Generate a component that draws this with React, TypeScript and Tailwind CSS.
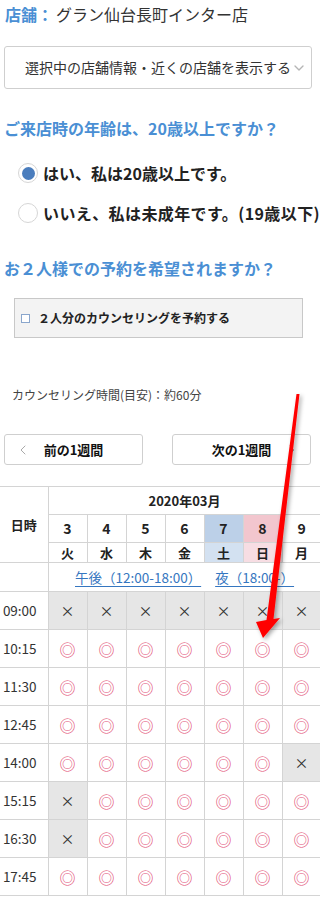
import React from 'react';
import { ChevronDown, ChevronLeft, ChevronRight } from 'lucide-react';

const days = [
    { d: "3", w: "火" },
    { d: "4", w: "水" },
    { d: "5", w: "木" },
    { d: "6", w: "金" },
    { d: "7", w: "土" },
    { d: "8", w: "日" },
    { d: "9", w: "月" },
];

// o = available, x = full
const slots: { time: string; marks: string }[] = [
    { time: "09:00", marks: "xxxxxxx" },
    { time: "10:15", marks: "ooooooo" },
    { time: "11:30", marks: "ooooooo" },
    { time: "12:45", marks: "ooooooo" },
    { time: "14:00", marks: "oooooox" },
    { time: "15:15", marks: "xoooooo" },
    { time: "16:30", marks: "xoooooo" },
    { time: "17:45", marks: "ooooooo" },
];

const Radio = ({ checked, label, wide }: { checked: boolean; label: string; wide?: boolean }) => (
    <div className="flex h-6 items-center whitespace-nowrap pl-[18px]">
        <span className="flex h-[20px] w-[20px] shrink-0 items-center justify-center rounded-full border border-[#d6d6d6] bg-white">
            {checked && <span className="h-[13px] w-[13px] rounded-full bg-[#4a7dbd]" />}
        </span>
        <span className={`ml-[5px] text-[16px] font-bold text-[#222] ${wide ? "tracking-[0.4px]" : ""}`}>{label}</span>
    </div>
);

const App = () => {
    return (
        <div className="relative min-h-[898px] w-[320px] overflow-hidden bg-white font-[Noto_Sans_CJK_JP,sans-serif] text-[#333]">
            <p className="whitespace-nowrap px-[5px] pt-[2px] text-[16px] leading-6">
                <span className="mr-[3px] font-bold text-[#4a8fd4]">店舗：</span>グラン仙台長町インター店
            </p>

            <div className="mx-[4px] mt-5 flex h-[43px] w-[308px] items-center rounded-[3px] border border-[#cfcfcf] pl-[20px] text-[14px] text-[#333] whitespace-nowrap">
                選択中の店舗情報・近くの店舗を表示する
                <ChevronDown size={16} strokeWidth={2} className="text-[#b5b5b5]" />
            </div>

            <h2 className="mt-[27px] whitespace-nowrap px-[4px] text-[16px] font-bold leading-6 text-[#4a8fd4]">
                ご来店時の年齢は、20歳以上ですか？
            </h2>

            <div className="mt-[21px] flex flex-col gap-4">
                <Radio checked label="はい、私は20歳以上です。" />
                <Radio checked={false} wide label="いいえ、私は未成年です。(19歳以下)" />
            </div>

            <h2 className="mt-[31px] whitespace-nowrap px-[4px] text-[16px] font-bold leading-6 text-[#4a8fd4]">
                お２人様での予約を希望されますか？
            </h2>

            <div className="mx-[14px] mt-[18px] flex h-[40px] w-[289px] items-center border border-[#c8c8c8] bg-[#f3f3f3] pl-[6px]">
                <span className="h-[9px] w-[9px] border border-[#8aa6cc] bg-white" />
                <span className="ml-[8px] text-[12px] font-bold text-[#222]">２人分のカウンセリングを予約する</span>
            </div>

            <p className="mt-12 px-[12px] text-[12px] leading-[18px] text-[#444] whitespace-nowrap">
                カウンセリング時間(目安)：約60分
            </p>

            <div className="mt-[30px] flex justify-between px-[4px] pr-[9px]">
                <button className="relative flex h-[31px] w-[139px] items-center justify-center rounded-[3px] border border-[#cfcfcf] bg-white text-[13px] font-bold text-[#111]">
                    <ChevronLeft size={16} strokeWidth={1.5} className="absolute left-[10px] text-[#aaa]" />
                    前の1週間
                </button>
                <button className="relative flex h-[31px] w-[139px] items-center justify-center rounded-[3px] border border-[#cfcfcf] bg-white text-[13px] font-bold text-[#111]">
                    次の1週間
                    <ChevronRight size={16} strokeWidth={1.5} className="absolute right-[10px] text-[#aaa]" />
                </button>
            </div>

            <table className="mt-[21px] w-[321px] table-fixed border-collapse text-center text-[#222]">
                <colgroup>
                    <col className="w-[48px]" />
                    {days.map((d) => <col key={d.d} className="w-[39px]" />)}
                </colgroup>
                <tbody>
                    <tr className="h-[28px]">
                        <td rowSpan={3} className="border border-l-0 border-[#d4d4d4] text-[13px] font-bold">日時</td>
                        <td colSpan={7} className="border border-[#d4d4d4] text-[13px] font-bold">2020年03月</td>
                    </tr>
                    <tr className="h-[28px]">
                        {days.map((d, i) => (
                            <td
                                key={d.d}
                                className={`border border-[#d4d4d4] text-[14px] font-bold ${i === 4 ? "bg-[#bcd0e8]" : i === 5 ? "bg-[#f2c6ce]" : ""}`}
                            >
                                {d.d}
                            </td>
                        ))}
                    </tr>
                    <tr className="h-[20px]">
                        {days.map((d, i) => (
                            <td
                                key={d.w}
                                className={`border border-[#d4d4d4] text-[13px] font-bold leading-4 ${i === 4 ? "bg-[#d3e1f1]" : i === 5 ? "bg-[#f7dde3]" : ""}`}
                            >
                                {d.w}
                            </td>
                        ))}
                    </tr>
                    <tr className="h-[29px]">
                        <td className="border-r border-[#d4d4d4]" />
                        <td colSpan={7} className="border-r border-[#d4d4d4] whitespace-nowrap text-[13.5px] text-[#3576c0]">
                            <a href="#" className="underline underline-offset-[3px]">午後（12:00-18:00）</a>
                            <a href="#" className="ml-[14px] underline underline-offset-[3px]">夜（18:00-）</a>
                        </td>
                    </tr>
                    {slots.map((s) => (
                        <tr key={s.time} className="h-[38px]">
                            <td className="border border-l-0 border-[#d4d4d4] pr-[8px] text-[13.5px] text-[#333]">{s.time}</td>
                            {s.marks.split("").map((m, i) => (
                                <td
                                    key={i}
                                    className={`border border-[#d4d4d4] ${m === "x" ? "bg-[#e6e6e6] text-[14px] text-[#333]" : "text-[16px] text-[#df4a72]"}`}
                                >
                                    {m === "x" ? "×" : "◎"}
                                </td>
                            ))}
                        </tr>
                    ))}
                </tbody>
            </table>

            {/* red annotation arrow */}
            <svg className="pointer-events-none absolute left-0 top-0" width="320" height="898" viewBox="0 0 320 898">
                <defs>
                    <filter id="arrowShadow" x="-50%" y="-10%" width="200%" height="120%">
                        <feDropShadow dx="2" dy="2" stdDeviation="2" floodColor="#000" floodOpacity="0.35" />
                    </filter>
                </defs>
                <polygon
                    points="296.5,394 299.5,394 273.5,619 280,618 263,638 256,622 266.5,620"
                    fill="#ff0000"
                    filter="url(#arrowShadow)"
                />
            </svg>
        </div>
    )
}

export default App
